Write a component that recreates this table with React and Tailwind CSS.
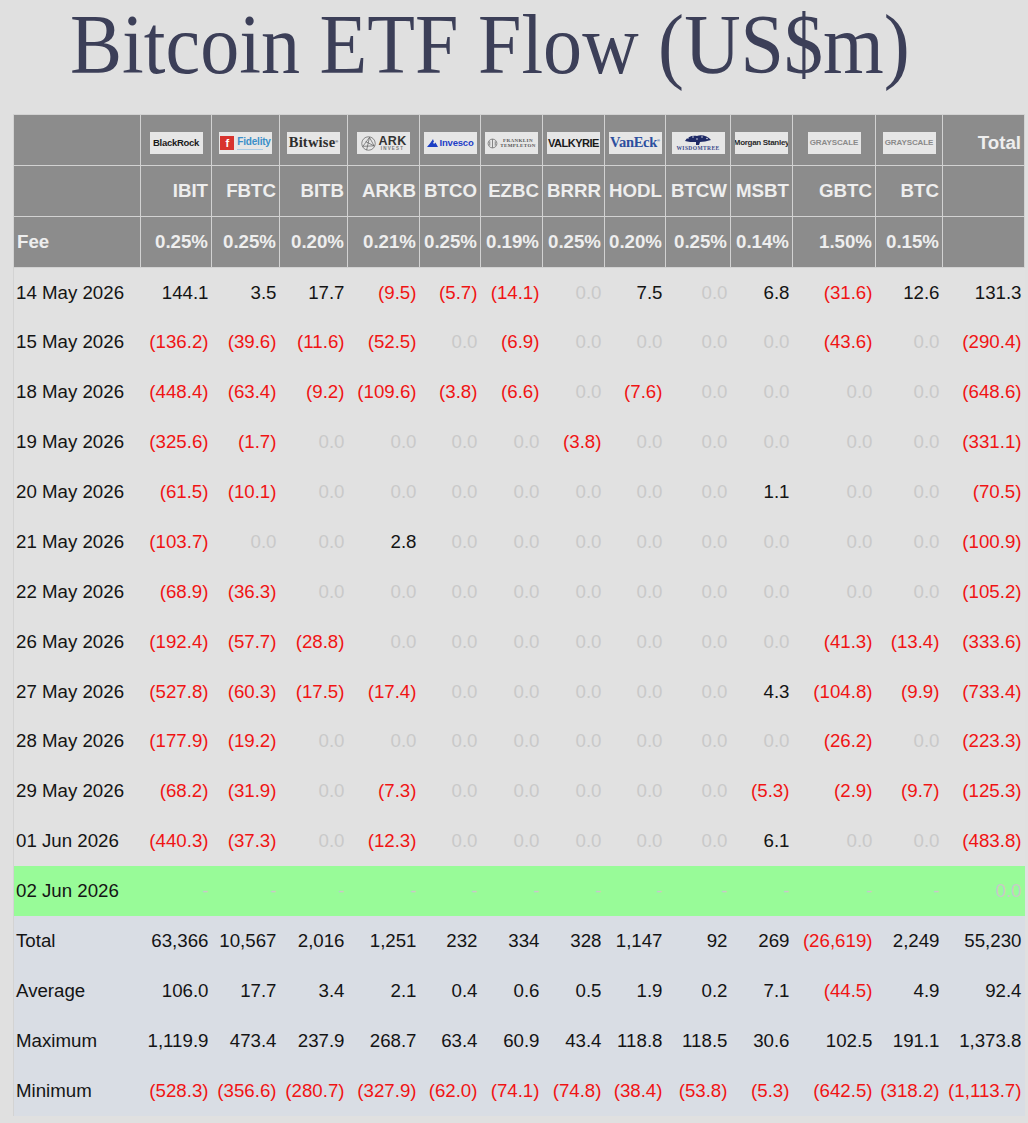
const funds = [
  { key: 'blackrock', ticker: 'IBIT', fee: '0.25%' },
  { key: 'fidelity', ticker: 'FBTC', fee: '0.25%' },
  { key: 'bitwise', ticker: 'BITB', fee: '0.20%' },
  { key: 'ark', ticker: 'ARKB', fee: '0.21%' },
  { key: 'invesco', ticker: 'BTCO', fee: '0.25%' },
  { key: 'franklin', ticker: 'EZBC', fee: '0.19%' },
  { key: 'valkyrie', ticker: 'BRRR', fee: '0.25%' },
  { key: 'vaneck', ticker: 'HODL', fee: '0.20%' },
  { key: 'wisdomtree', ticker: 'BTCW', fee: '0.25%' },
  { key: 'morgan', ticker: 'MSBT', fee: '0.14%' },
  { key: 'grayscale', ticker: 'GBTC', fee: '1.50%' },
  { key: 'grayscale', ticker: 'BTC', fee: '0.15%' },
]

const widths = [127, 71, 68, 68, 72, 61, 62, 62, 61, 65, 62, 83, 67, 82]

const Z = '0.0'
const days = [
  ['14 May 2026', ['144.1', '3.5', '17.7', '(9.5)', '(5.7)', '(14.1)', Z, '7.5', Z, '6.8', '(31.6)', '12.6', '131.3']],
  ['15 May 2026', ['(136.2)', '(39.6)', '(11.6)', '(52.5)', Z, '(6.9)', Z, Z, Z, Z, '(43.6)', Z, '(290.4)']],
  ['18 May 2026', ['(448.4)', '(63.4)', '(9.2)', '(109.6)', '(3.8)', '(6.6)', Z, '(7.6)', Z, Z, Z, Z, '(648.6)']],
  ['19 May 2026', ['(325.6)', '(1.7)', Z, Z, Z, Z, '(3.8)', Z, Z, Z, Z, Z, '(331.1)']],
  ['20 May 2026', ['(61.5)', '(10.1)', Z, Z, Z, Z, Z, Z, Z, '1.1', Z, Z, '(70.5)']],
  ['21 May 2026', ['(103.7)', Z, Z, '2.8', Z, Z, Z, Z, Z, Z, Z, Z, '(100.9)']],
  ['22 May 2026', ['(68.9)', '(36.3)', Z, Z, Z, Z, Z, Z, Z, Z, Z, Z, '(105.2)']],
  ['26 May 2026', ['(192.4)', '(57.7)', '(28.8)', Z, Z, Z, Z, Z, Z, Z, '(41.3)', '(13.4)', '(333.6)']],
  ['27 May 2026', ['(527.8)', '(60.3)', '(17.5)', '(17.4)', Z, Z, Z, Z, Z, '4.3', '(104.8)', '(9.9)', '(733.4)']],
  ['28 May 2026', ['(177.9)', '(19.2)', Z, Z, Z, Z, Z, Z, Z, Z, '(26.2)', Z, '(223.3)']],
  ['29 May 2026', ['(68.2)', '(31.9)', Z, '(7.3)', Z, Z, Z, Z, Z, '(5.3)', '(2.9)', '(9.7)', '(125.3)']],
  ['01 Jun 2026', ['(440.3)', '(37.3)', Z, '(12.3)', Z, Z, Z, Z, Z, '6.1', Z, Z, '(483.8)']],
]

const today = ['02 Jun 2026', ['-', '-', '-', '-', '-', '-', '-', '-', '-', '-', '-', '-', '0.0']]

const stats = [
  ['Total', ['63,366', '10,567', '2,016', '1,251', '232', '334', '328', '1,147', '92', '269', '(26,619)', '2,249', '55,230']],
  ['Average', ['106.0', '17.7', '3.4', '2.1', '0.4', '0.6', '0.5', '1.9', '0.2', '7.1', '(44.5)', '4.9', '92.4']],
  ['Maximum', ['1,119.9', '473.4', '237.9', '268.7', '63.4', '60.9', '43.4', '118.8', '118.5', '30.6', '102.5', '191.1', '1,373.8']],
  ['Minimum', ['(528.3)', '(356.6)', '(280.7)', '(327.9)', '(62.0)', '(74.1)', '(74.8)', '(38.4)', '(53.8)', '(5.3)', '(642.5)', '(318.2)', '(1,113.7)']],
]

function tone(v) {
  if (v.startsWith('(')) return 'text-[#f01414]'
  if (v === Z || v === '-') return 'text-[#c9c9c9]'
  return 'text-[#141414]'
}

function Logo({ kind }) {
  const box = 'mx-auto mt-[6px] w-[53px] h-[22px] bg-[#e6e6e6] flex items-center justify-center overflow-hidden'
  if (kind === 'blackrock')
    return (
      <div className={box}>
        <span className="font-['Liberation_Sans'] font-bold text-[9.5px] tracking-[-0.3px] text-[#1a1a1a]">BlackRock</span>
      </div>
    )
  if (kind === 'fidelity')
    return (
      <div className={`${box} gap-[3px]`}>
        <span className="w-[14px] h-[14px] bg-[#d8332e] text-white font-['Liberation_Sans'] font-bold text-[11px] leading-none flex items-center justify-center">f</span>
        <span className="flex flex-col items-start leading-none">
          <span className="font-['Liberation_Sans'] text-[10px] tracking-[-0.2px] text-[#3a8fc9]">Fidelity</span>
          <span className="mt-[2px] w-[26px] h-[1px] bg-[#a9cbe4]" />
        </span>
      </div>
    )
  if (kind === 'bitwise')
    return (
      <div className={box}>
        <span className="font-['Liberation_Serif'] text-[14.5px] tracking-[0.2px] text-[#2e2e2e]">Bitwise</span>
        <span className="text-[4px] self-start mt-[7px] text-[#444]">®</span>
      </div>
    )
  if (kind === 'ark')
    return (
      <div className={`${box} gap-[3px]`}>
        <svg width="15" height="15" viewBox="0 0 16 16" fill="none" stroke="#555" strokeWidth="0.7">
          <circle cx="8" cy="8" r="7.2" />
          <path d="M2 11 L9 1.5 L14 10.5 Z M5 6 L14 10.5 M9 1.5 L6 15" />
        </svg>
        <span className="flex flex-col items-center leading-none">
          <span className="font-['Liberation_Sans'] text-[12.5px] text-[#333] tracking-[0.3px]">ARK</span>
          <span className="font-['Liberation_Sans'] text-[4.5px] text-[#777] tracking-[1.2px]">INVEST</span>
        </span>
      </div>
    )
  if (kind === 'invesco')
    return (
      <div className={`${box} gap-[2px]`}>
        <svg width="11" height="8" viewBox="0 0 11 8">
          <path d="M0 8 L5 2 L7 5 L8.5 3.5 L11 8 Z" fill="#1c3fc4" />
          <path d="M3 5 L6 0 L7 3 Z" fill="#1c3fc4" />
        </svg>
        <span className="font-['Liberation_Sans'] font-bold text-[9.5px] tracking-[-0.2px] text-[#1e3ec8]">Invesco</span>
      </div>
    )
  if (kind === 'franklin')
    return (
      <div className={`${box} gap-[2px]`}>
        <svg width="11" height="11" viewBox="0 0 10 10" fill="none" stroke="#777" strokeWidth="0.8">
          <circle cx="5" cy="5" r="4" />
          <path d="M5 1 V9 M2.5 3 V7 M7.5 3 V7" />
        </svg>
        <span className="flex flex-col leading-[5.5px] font-['Liberation_Serif'] text-[5px] text-[#555] tracking-[0.4px]">
          <span>FRANKLIN</span>
          <span>TEMPLETON</span>
        </span>
      </div>
    )
  if (kind === 'valkyrie')
    return (
      <div className={box}>
        <span className="font-['Liberation_Sans'] font-bold text-[11px] tracking-[-0.5px] text-[#1a1a1a]">VALKYRIE</span>
      </div>
    )
  if (kind === 'vaneck')
    return (
      <div className={box}>
        <span className="font-['Liberation_Serif'] font-bold text-[14.5px] tracking-[-0.3px] text-[#2c4f9e]">VanEck</span>
        <span className="text-[4px] self-start mt-[6px] text-[#2c4f9e]">®</span>
      </div>
    )
  if (kind === 'wisdomtree')
    return (
      <div className={`${box} flex-col`}>
        <svg width="30" height="12" viewBox="0 0 30 12">
          <path d="M2 7 C4 3 9 1 14 2 C18 0 25 2 28 6 C24 7 20 8 17 8 L16 11 L13 11 L13 8 C9 8 5 8 2 7 Z" fill="#1f2a66" />
          <circle cx="5" cy="4" r="0.7" fill="#fff" />
          <circle cx="10" cy="3" r="0.7" fill="#fff" />
          <circle cx="19" cy="3" r="0.7" fill="#fff" />
          <circle cx="24" cy="4.5" r="0.7" fill="#fff" />
          <circle cx="14" cy="5" r="0.7" fill="#fff" />
        </svg>
        <span className="font-['Liberation_Serif'] text-[5.5px] leading-none text-[#3a4a8a] tracking-[0.4px]">WISDOMTREE</span>
      </div>
    )
  if (kind === 'morgan')
    return (
      <div className={box}>
        <span className="font-['Liberation_Sans'] text-[8px] tracking-[-0.3px] text-[#2a2a2a] whitespace-nowrap">Morgan Stanley</span>
      </div>
    )
  return (
    <div className={box}>
      <span className="font-['Liberation_Sans'] text-[8px] tracking-[-0.1px] text-[#8a8a8a]">GRAYSCALE</span>
    </div>
  )
}

const th = 'border border-[#d2d2d2] px-[3px] h-[51px] font-bold text-[#eeeeee]'

function DataRow({ label, values, bg }) {
  return (
    <tr className={`h-[49.9px] ${bg}`}>
      <td className="px-[2px] text-left text-[#141414] border-l border-[#d3d3d3] whitespace-nowrap">{label}</td>
      {values.map((v, i) => (
        <td key={i} className={`px-[3px] text-right whitespace-nowrap ${tone(v)}`}>{v}</td>
      ))}
    </tr>
  )
}

export default function App() {
  return (
    <div className="min-h-[1123px] bg-[#e0e0e0] font-['Liberation_Sans',Arial,sans-serif] overflow-hidden">
      <h1 className="h-[114px] pl-[70px] font-['Liberation_Serif',serif] text-[84px] leading-[90px] text-[#3c3f58] whitespace-nowrap">
        <span className="inline-block origin-left scale-x-[0.93]">Bitcoin ETF Flow (US$m)</span>
      </h1>
      <table className="ml-[13px] w-[1011px] table-fixed border-collapse text-[18.7px]">
        <colgroup>
          {widths.map((w, i) => (
            <col key={i} style={{ width: w }} />
          ))}
        </colgroup>
        <thead className="bg-[#8c8c8c]">
          <tr>
            <th className={th} />
            {funds.map((f, i) => (
              <th key={i} className={th}>
                <Logo kind={f.key} />
              </th>
            ))}
            <th className={`${th} text-right pt-[6px]`}>Total</th>
          </tr>
          <tr>
            <th className={th} />
            {funds.map((f) => (
              <th key={f.ticker} className={`${th} text-right`}>{f.ticker}</th>
            ))}
            <th className={th} />
          </tr>
          <tr>
            <th className={`${th} text-left`}>Fee</th>
            {funds.map((f) => (
              <th key={f.ticker} className={`${th} text-right whitespace-nowrap`}>{f.fee}</th>
            ))}
            <th className={th} />
          </tr>
        </thead>
        <tbody>
          {days.map(([d, vals]) => (
            <DataRow key={d} label={d} values={vals} bg="bg-[#e1e1e1]" />
          ))}
          <DataRow label={today[0]} values={today[1]} bg="bg-[#98fb98]" />
          {stats.map(([d, vals]) => (
            <DataRow key={d} label={d} values={vals} bg="bg-[#d9dde4]" />
          ))}
        </tbody>
      </table>
    </div>
  )
}
